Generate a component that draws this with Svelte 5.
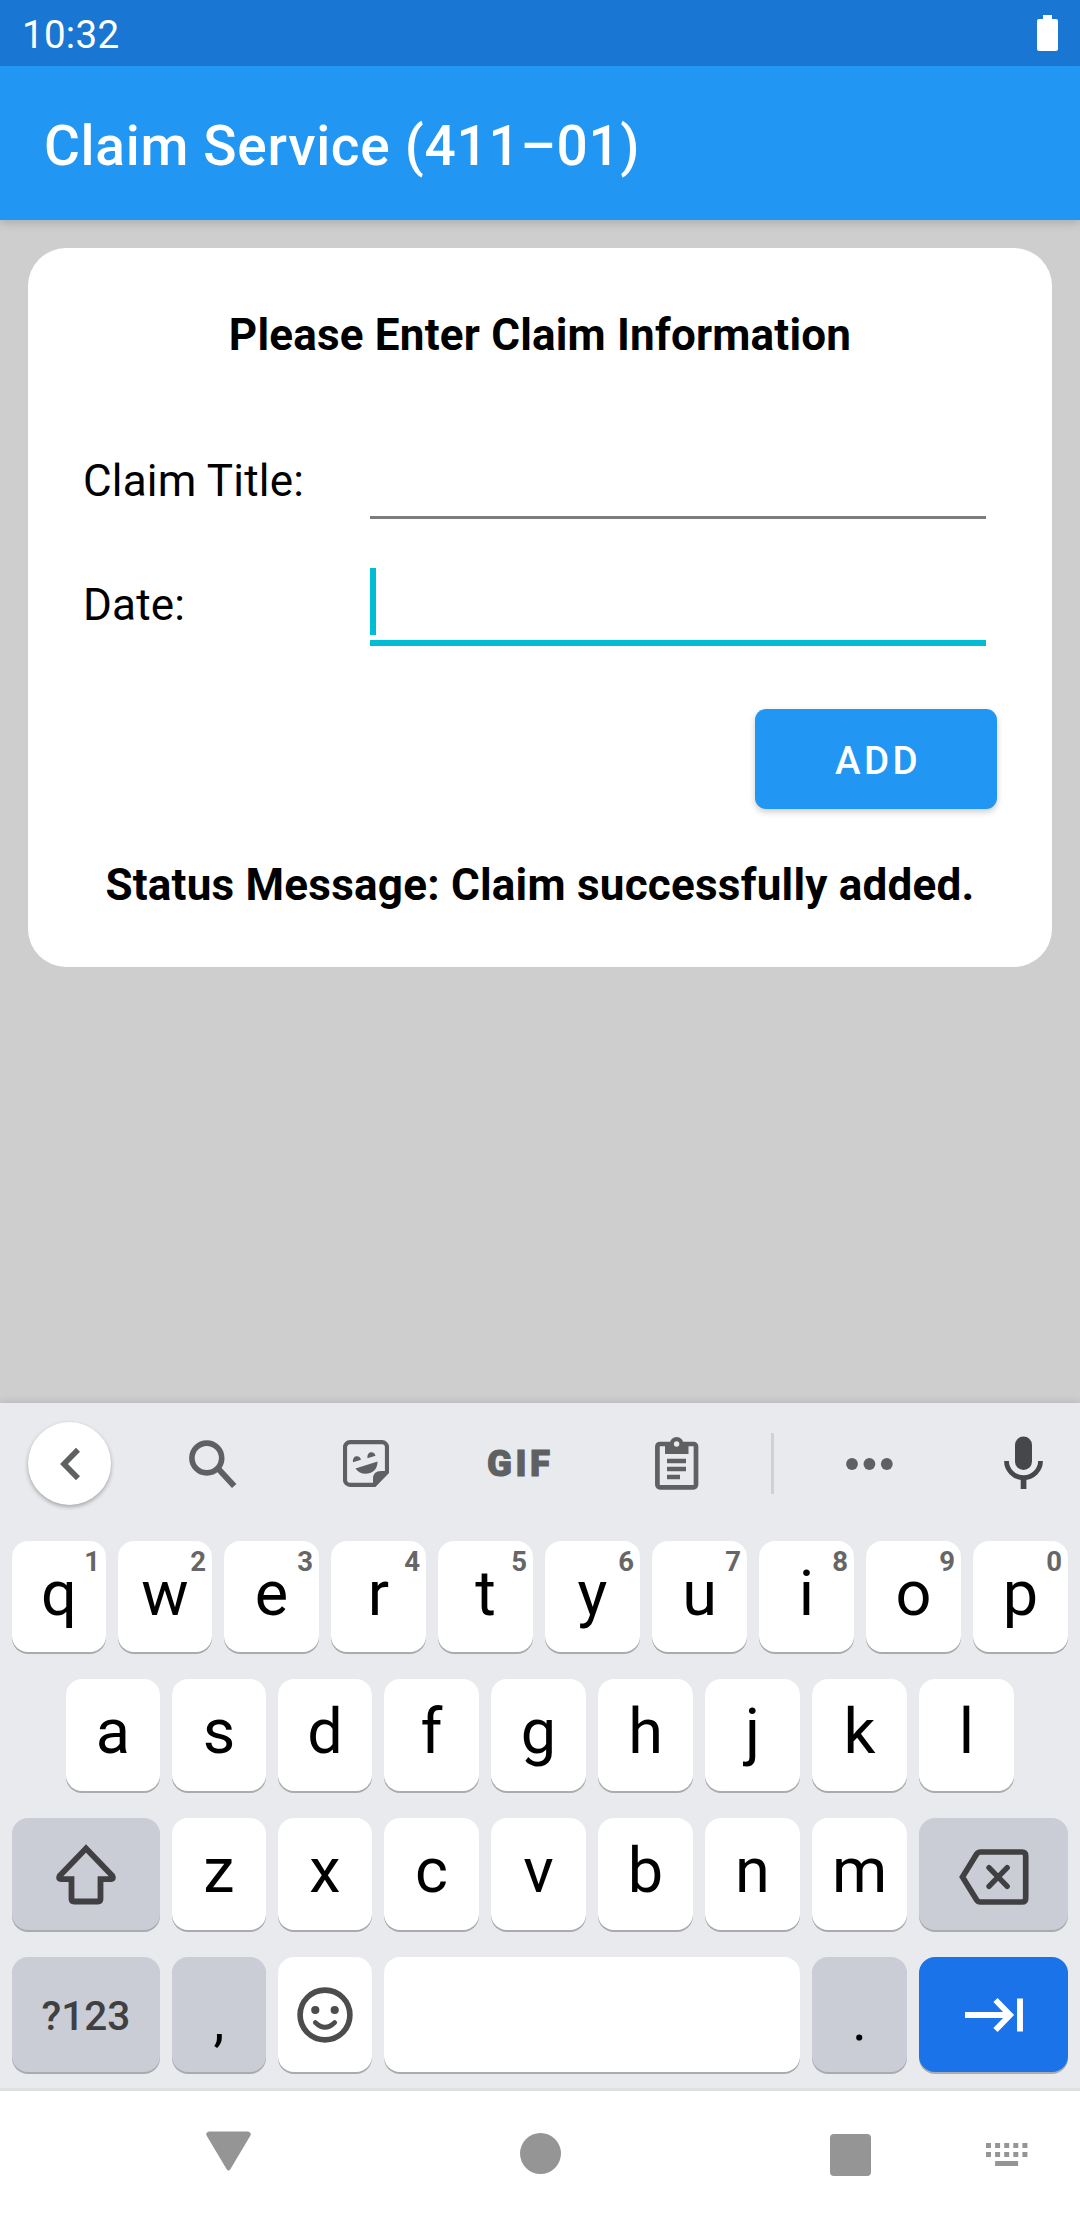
<script>
  const title = 'Claim Service (411–01)';
  const top = [...'qwertyuiop'].map((letter, i) => ({ letter, hint: (i + 1) % 10 }));
  const home = [...'asdfghjkl'];
  const bottom = [...'zxcvbnm'];
</script>

<div class="screen">
  <header class="status">
    <span>10:32</span>
    <svg class="battery" width="21" height="36" viewBox="0 0 21 36">
      <path d="M6 0h9v4h4a2 2 0 0 1 2 2v28a2 2 0 0 1-2 2H2a2 2 0 0 1-2-2V6a2 2 0 0 1 2-2h4z" fill="#fff" />
    </svg>
  </header>
  <div class="appbar"><h1>{title}</h1></div>

  <main>
    <section class="card">
      <h2>Please Enter Claim Information</h2>
      <div class="field">
        <span class="label">Claim Title:</span>
        <div class="input"></div>
      </div>
      <div class="field">
        <span class="label">Date:</span>
        <div class="input focused"><i class="caret"></i></div>
      </div>
      <button class="add">ADD</button>
      <p class="message">Status Message: Claim successfully added.</p>
    </section>
  </main>

  <section class="keyboard">
    <div class="tools">
      <div class="back">
        <svg width="83" height="83" viewBox="0 0 83 83" fill="none" stroke="#5f6062" stroke-width="5.6">
          <path d="M50 27.8 36 42l14 14.2" />
        </svg>
      </div>
      <svg class="search" width="48" height="50" viewBox="0 0 48 50" fill="none" stroke="#5f6062">
        <circle cx="17.8" cy="18" r="14.9" stroke-width="5.6" />
        <path d="M29 28.5 45.2 46" stroke-width="6" />
      </svg>
      <svg class="sticker" width="46" height="47" viewBox="0 0 46 47" fill="#5f6062">
        <path d="M7 2.2h32a5 5 0 0 1 5 5V32L31.5 44.8H7a5 5 0 0 1-5-5V7.2a5 5 0 0 1 5-5z" fill="none" stroke="#5f6062" stroke-width="4.2" />
        <path d="M30 46V39q0-8 8-8h7v2L32 46.5z" />
        <path d="M10 22.2a4.1 4.7 0 0 1 8-2.500zM24.5 18.200a4.100 4.700 0 0 1 8-2.500z" />
        <path d="M12.500 28.500 34.500 21.500C35 35 18 37.500 12.500 28.500z" />
      </svg>
      <span class="gif">GIF</span>
      <svg class="clipboard" width="44" height="53" viewBox="0 0 44 53" fill="#5f6062">
        <rect x="2.400" y="7" width="38.600" height="43.300" rx="2.500" fill="none" stroke="#5f6062" stroke-width="4.700" />
        <path d="M10 6h23.500v11H10z" />
        <circle cx="21.600" cy="7" r="6.900" />
        <circle cx="21.600" cy="7" r="2.700" fill="#e8eaed" />
        <path d="M12 21.700h19v4.600H12zM12 29.700h19v4.600H12zM12 37.700h13v4.600H12z" />
      </svg>
      <i class="rule"></i>
      <svg class="more" width="48" height="12" viewBox="0 0 48 12" fill="#5f6062">
        <circle cx="6" cy="6" r="5.900" /><circle cx="23.400" cy="6" r="5.900" /><circle cx="40.800" cy="6" r="5.900" />
      </svg>
      <svg class="mic" width="40" height="54" viewBox="0 0 40 54" fill="#46474a">
        <rect x="11" y="0.500" width="17" height="33.500" rx="8.500" />
        <path d="M2.500 25c0 9 7.500 16.700 17 16.700S36.500 34 36.500 25" fill="none" stroke="#46474a" stroke-width="4.800" />
        <path d="M16.700 41h5.700v12h-5.700z" />
      </svg>
    </div>

    <div class="row numbers">
      {#each top as key}
        <div class="key">{key.letter}<sup>{key.hint}</sup></div>
      {/each}
    </div>
    <div class="row inset">
      {#each home as letter}
        <div class="key">{letter}</div>
      {/each}
    </div>
    <div class="row lower">
      <div class="key icon dim">
        <svg width="64" height="62" viewBox="0 0 64 62" fill="none" stroke="#404042" stroke-width="5.800">
          <path d="M32 5.500 5.500 33q-1.500 2.800 1.500 3.200h10.500V56q0 2.500 2.500 2.500h24q2.500 0 2.500-2.500V36.200H57q3-.4 1.500-3.200z" />
        </svg>
      </div>
      {#each bottom as letter}
        <div class="key">{letter}</div>
      {/each}
      <div class="key icon dim">
        <svg class="erase" width="70" height="56" viewBox="0 0 70 56" fill="none" stroke="#404042" stroke-width="5.700">
          <path d="M3.500 28 17.500 5.200q1.400-2.200 4-2.200H63q3.700 0 3.700 3.700v42.600q0 3.700-3.700 3.700H21.500q-2.600 0-4-2.200z" />
          <path d="M30 18.700 48.200 37.300M48.200 18.700 30 37.300" stroke-linecap="round" stroke-width="5.400" />
        </svg>
      </div>
    </div>
    <div class="row last">
      <div class="key dim symbols">?123</div>
      <div class="key dim mark">,</div>
      <div class="key icon">
        <svg class="smile" width="56" height="56" viewBox="0 0 56 56" fill="#4c4c4c">
          <circle cx="28" cy="28" r="24.900" fill="none" stroke="#4c4c4c" stroke-width="5.600" />
          <circle cx="18.300" cy="23" r="4.100" /><circle cx="37.700" cy="23" r="4.100" />
          <path d="M18.300 35.500q9.700 9.600 19.400 0" fill="none" stroke="#4c4c4c" stroke-width="4.600" stroke-linecap="round" />
        </svg>
      </div>
      <div class="key"></div>
      <div class="key dim mark">.</div>
      <div class="key icon next">
        <svg width="60" height="36" viewBox="0 0 60 36" fill="none" stroke="#fff" stroke-width="5.900">
          <path d="M1 18H47M31.500 3 46 18 31.500 33M56 1.500v33" />
        </svg>
      </div>
    </div>
  </section>

  <nav>
    <svg class="down" width="45" height="40" viewBox="0 0 45 40" fill="#959595">
      <path d="M3 .5h39q4 .8 2.300 4.300L24.500 38q-2 3-4 0L.7 4.800Q-1 1.300 3 .5z" />
    </svg>
    <i class="home"></i>
    <i class="recent"></i>
    <svg class="switch" width="42" height="23" viewBox="0 0 42 23" fill="#959595">
      {#each [0, 1, 2, 3, 4] as col}
        <path d="M{col * 9.1} 0h5v5h-5zM{col * 9.1} 9h5v5h-5z" />
      {/each}
      <path d="M9.100 18h23v5h-23z" />
    </svg>
  </nav>
</div>

<style>
  :global(body) { margin: 0; }
  .screen {
    width: 1080px;
    height: 2220px;
    display: flex;
    flex-direction: column;
    overflow: hidden;
    background: #cecece;
    font-family: Roboto, 'Liberation Sans', sans-serif;
    color: #000;
  }
  svg { display: block; flex: none; }
  .status {
    position: relative;
    z-index: 1;
    height: 66px;
    flex: none;
    box-sizing: border-box;
    padding: 0 22px;
    display: flex;
    align-items: center;
    justify-content: space-between;
    background: #1976d2;
    color: #fff;
    font-size: 38.5px;
    line-height: 62px;
    letter-spacing: 0.3px;
  }
  .status span { padding-top: 4px; }
  .appbar {
    height: 154px;
    flex: none;
    padding-left: 44px;
    background: #2196f3;
    box-shadow: 0 2px 10px rgba(0, 0, 0, 0.2);
  }
  h1 {
    margin: 0;
    padding-top: 3px;
    color: #fff;
    font-size: 55px;
    line-height: 154px;
    font-weight: 500;
    letter-spacing: 0.7px;
  }
  main { flex: 1; padding: 28px; }
  .card {
    height: 719px;
    box-sizing: border-box;
    padding: 57px 55px 0;
    display: flex;
    flex-direction: column;
    border-radius: 38px;
    background: #fff;
    font-size: 44px;
    letter-spacing: 0.2px;
  }
  h2, .message {
    margin: 0;
    font-size: 44px;
    line-height: 60px;
    font-weight: 700;
    text-align: center;
    white-space: nowrap;
  }
  h2 { margin-bottom: 73px; }
  .field { display: flex; height: 124px; }
  .label { width: 287px; line-height: 86px; }
  .input {
    width: 616px;
    height: 78px;
    border-bottom: 3px solid #7d7d7d;
  }
  .input.focused {
    height: 78px;
    border-bottom: 6px solid #00bcd4;
  }
  .caret {
    display: block;
    width: 6px;
    height: 67px;
    margin-top: 6px;
    background: #00bcd4;
  }
  .add {
    align-self: flex-end;
    width: 242px;
    height: 100px;
    margin-top: 23px;
    flex: none;
    padding: 4px 0 0 4px;
    border: 0;
    border-radius: 11px;
    background: #2196f3;
    box-shadow: 0 3px 6px rgba(0, 0, 0, 0.2);
    color: #fff;
    font: 500 38.5px/96px Roboto, sans-serif;
    letter-spacing: 3.44px;
  }
  .message { margin-top: 46px; letter-spacing: 0.23px; }

  .keyboard {
    height: 688px;
    flex: none;
    box-sizing: border-box;
    background: #e8eaed;
    border-bottom: 3px solid #e0e0e0;
    box-shadow: 0 -1px 8px rgba(0, 0, 0, 0.12);
  }
  .tools {
    height: 138px;
    box-sizing: border-box;
    padding: 0 36px 18px 28px;
    display: flex;
    align-items: center;
  }
  .back {
    width: 83px;
    height: 83px;
    border-radius: 50%;
    background: #fff;
    box-shadow: 0 2px 4px rgba(0, 0, 0, 0.3);
  }
  .search { margin: 4px 0 0 78px; }
  .sticker { margin-left: 106px; }
  .gif {
    width: 66px;
    margin-left: 98px;
    color: #5f6062;
    font-size: 36.5px;
    font-weight: 900;
    letter-spacing: 3.5px;
    -webkit-text-stroke: 1px #5f6062;
  }
  .clipboard { margin-left: 102px; }
  .rule { width: 3px; height: 61px; margin-left: 72px; background: #d0d1d4; }
  .more { margin: 2px 0 0 72px; }
  .mic { margin-left: 110px; }
  .row {
    height: 112px;
    margin-bottom: 27px;
    padding: 0 12px;
    display: grid;
    gap: 12px;
  }
  .numbers { height: 111px; grid-template-columns: repeat(2, 94px) repeat(8, 95px); }
  .inset { padding: 0 66px; grid-template-columns: repeat(3, 94px) repeat(6, 95px); }
  .lower { grid-template-columns: 148px repeat(2, 94px) repeat(5, 95px) 149px; }
  .last { height: 115px; margin: 0; grid-template-columns: 148px 94px 94px 416px 95px 149px; }
  .key {
    position: relative;
    box-sizing: border-box;
    padding-bottom: 6px;
    display: flex;
    align-items: center;
    justify-content: center;
    border-radius: 16px;
    background: #fff;
    box-shadow: 0 2px 0 #a9abad;
    font-size: 63px;
    line-height: 100px;
  }
  .key sup {
    position: absolute;
    top: 5px;
    right: 6px;
    color: #666;
    font-size: 27.5px;
    line-height: 32px;
    font-weight: 700;
  }
  .key.icon { padding: 0; }
  .erase { margin-top: 5px; }
  .dim { background: #cacdd6; }
  .key.symbols { padding: 3px 0 0; color: #404042; font-size: 40.5px; font-weight: 500; }
  .key.mark { padding: 13px 0 0; font-size: 55px; }
  .next { background: #1a73e8; }

  nav {
    height: 129px;
    flex: none;
    box-sizing: border-box;
    padding: 40px 51px 0 206px;
    display: flex;
    background: #fff;
  }
  .home {
    width: 41px;
    height: 41px;
    margin: 2px 0 0 269px;
    border-radius: 50%;
    background: #959595;
  }
  .recent {
    width: 41px;
    height: 42px;
    margin: 3px 0 0 269px;
    border-radius: 4px;
    background: #959595;
  }
  .switch { margin: 12px 0 0 115px; }
</style>
